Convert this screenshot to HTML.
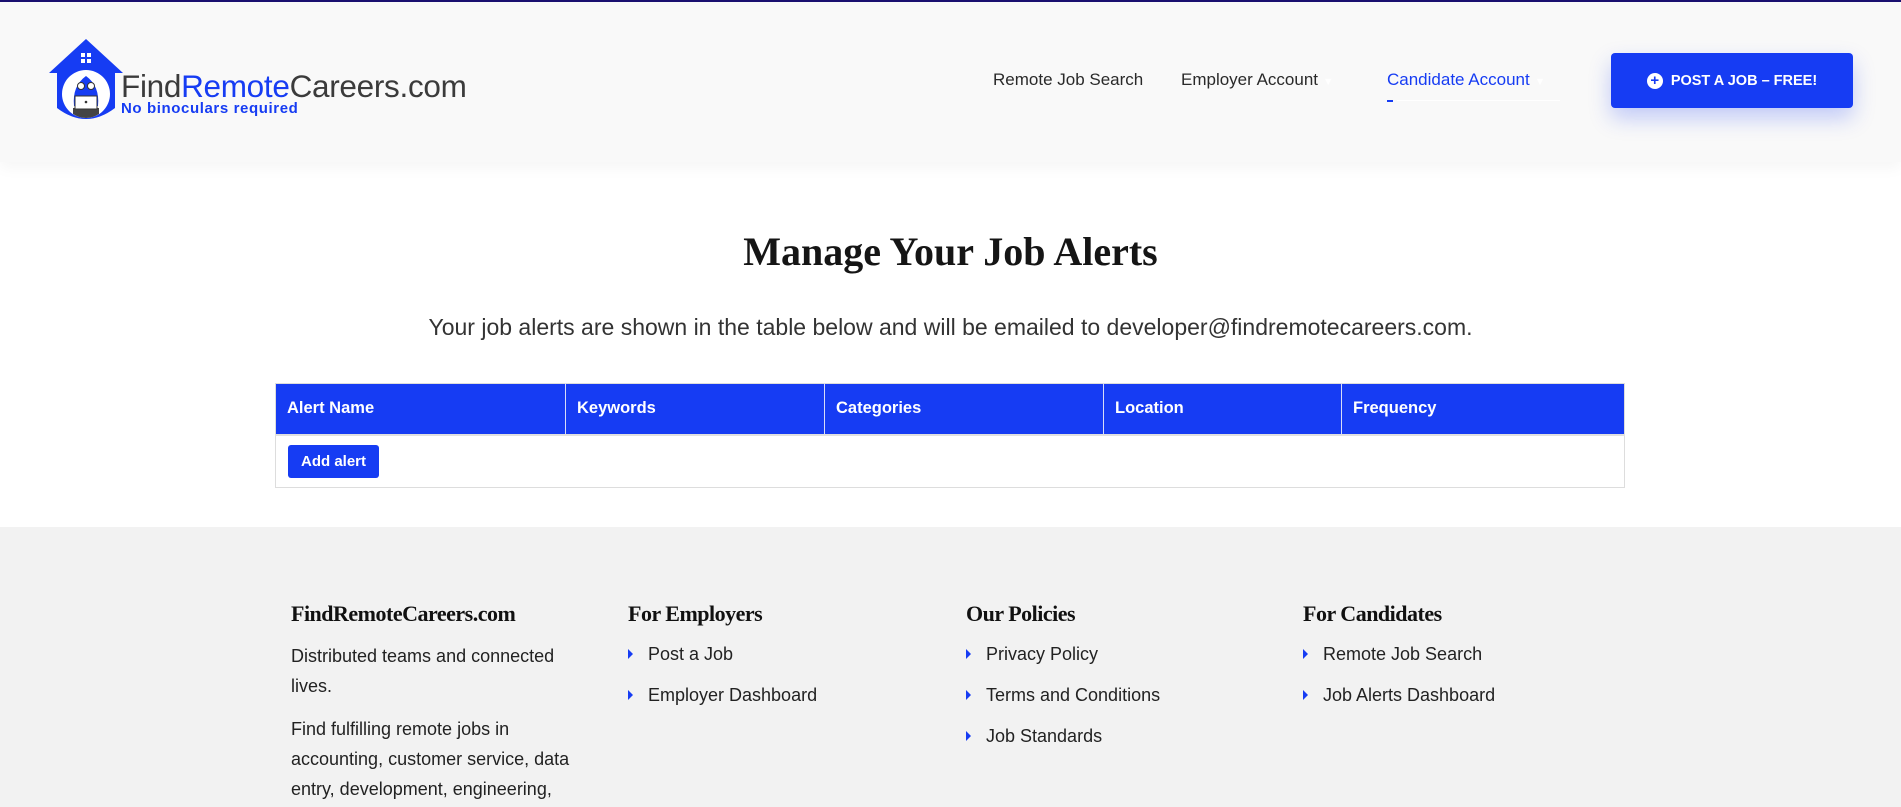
<!DOCTYPE html>
<html><head><meta charset="utf-8"><style>
*{margin:0;padding:0;box-sizing:border-box}
body{width:1901px;height:807px;overflow:hidden;background:#fff;font-family:"Liberation Sans",sans-serif;position:relative;color:#222}
.a{position:absolute;white-space:nowrap}
.hdr{position:absolute;left:0;top:0;width:1901px;height:162px;background:#f9f9f9;border-top:2px solid #1a1070;box-shadow:0 6px 14px rgba(0,0,0,0.04)}
.nav{font-size:17px;color:#2a2a2a}
.btn{position:absolute;left:1611px;top:53px;width:242px;height:55px;background:#163cf3;border-radius:4px;box-shadow:0 10px 22px rgba(22,60,243,0.25);color:#fff;font-weight:bold;font-size:14.5px;display:flex;align-items:center;justify-content:center;gap:8px}
.foot{position:absolute;left:0;top:527px;width:1901px;height:280px;background:#f2f2f2}
.fh{font-family:"Liberation Serif",serif;font-weight:bold;font-size:22px;color:#111;letter-spacing:-0.5px}
.ft{font-size:18px;color:#222}
.tri{display:inline-block;width:0;height:0;border-left:5px solid #163cf3;border-top:5px solid transparent;border-bottom:5px solid transparent;margin-right:15px;vertical-align:1px}
th{color:#fff;font-weight:bold;font-size:16.5px;text-align:left;padding-left:11px;border-right:1px solid #d8dcf8;height:51px}
</style></head><body>
<div class="hdr"></div>
<svg class="a" style="left:48px;top:38px" width="76" height="84" viewBox="0 0 76 84">
<path d="M38 1 L75 35 L67 35 L67 70 Q38 92 9 70 L9 35 L1 35 Z" fill="#163cf3"/>
<rect x="33" y="15" width="4" height="4" fill="#fff"/><rect x="39" y="15" width="4" height="4" fill="#fff"/><rect x="33" y="21" width="4" height="4" fill="#fff"/><rect x="39" y="21" width="4" height="4" fill="#fff"/>
<circle cx="38" cy="56" r="24" fill="#fff"/>
<path d="M25 76 Q38 84 51 76 L51 70 L25 70 Z" fill="#444"/>
<path d="M26 68 Q24 48 38 38 Q52 48 50 68 Z" fill="#163cf3"/>
<circle cx="33" cy="48" r="3.5" fill="#fff" stroke="#333"/><circle cx="43" cy="48" r="3.5" fill="#fff" stroke="#333"/>
<rect x="27" y="58" width="22" height="13" fill="#fff" stroke="#333"/><circle cx="38" cy="64" r="1.3" fill="#333"/>
</svg>
<div class="a" style="left:121px;top:68px;font-size:31.5px;color:#3b3b3b;letter-spacing:-0.3px">Find<span style="color:#163cf3">Remote</span>Careers.com</div>
<div class="a" style="left:121px;top:100px;font-size:15px;font-weight:bold;color:#163cf3;letter-spacing:0.6px">No binoculars required</div>
<div class="a nav" style="left:993px;top:70px">Remote Job Search</div>
<div class="a nav" style="left:1181px;top:70px">Employer Account <span style="color:#fff;font-size:11px">▼</span></div>
<div class="a nav" style="left:1387px;top:70px;color:#163cf3">Candidate Account <span style="color:#fff;font-size:11px">▼</span></div>
<div class="a" style="left:1387px;top:100px;width:6px;height:2px;background:#163cf3"></div>
<div class="a" style="left:1397px;top:100px;width:163px;height:1px;background:#fff"></div>
<div class="btn"><span style="display:inline-flex;width:16px;height:16px;border-radius:50%;background:#fff;color:#163cf3;font-size:15px;align-items:center;justify-content:center;line-height:1">+</span>POST A JOB – FREE!</div>
<div class="a" style="left:0;width:1901px;top:228px;text-align:center;font-family:'Liberation Serif',serif;font-weight:bold;font-size:40px;color:#151515">Manage Your Job Alerts</div>
<div class="a" style="left:0;width:1901px;top:314px;text-align:center;font-size:23px;color:#333">Your job alerts are shown in the table below and will be emailed to developer@findremotecareers.com.</div>
<table class="a" style="left:275px;top:383px;width:1350px;border-collapse:collapse;border:1px solid #ddd">
<tr style="background:#163cf3"><th style="width:290px">Alert Name</th><th style="width:259px">Keywords</th><th style="width:279px">Categories</th><th style="width:238px">Location</th><th style="border-right:none">Frequency</th></tr>
<tr><td colspan="5" style="height:53px;padding-left:12px;background:#fff;border-top:2px solid #e0e0e0"><span style="display:inline-block;background:#163cf3;color:#fff;font-weight:bold;font-size:15px;padding:8px 13px;border-radius:3px">Add alert</span></td></tr>
</table>
<div class="foot"></div>
<div class="a fh" style="left:291px;top:601px">FindRemoteCareers.com</div>
<div class="a fh" style="left:628px;top:601px">For Employers</div>
<div class="a fh" style="left:966px;top:601px">Our Policies</div>
<div class="a fh" style="left:1303px;top:601px">For Candidates</div>
<div class="a ft" style="left:291px;top:642px;line-height:29.5px">Distributed teams and connected<br>lives.</div>
<div class="a ft" style="left:291px;top:714px;line-height:30px">Find fulfilling remote jobs in<br>accounting, customer service, data<br>entry, development, engineering,</div>
<div class="a ft" style="left:628px;top:644px"><span class="tri"></span>Post a Job</div>
<div class="a ft" style="left:628px;top:685px"><span class="tri"></span>Employer Dashboard</div>
<div class="a ft" style="left:966px;top:644px"><span class="tri"></span>Privacy Policy</div>
<div class="a ft" style="left:966px;top:685px"><span class="tri"></span>Terms and Conditions</div>
<div class="a ft" style="left:966px;top:726px"><span class="tri"></span>Job Standards</div>
<div class="a ft" style="left:1303px;top:644px"><span class="tri"></span>Remote Job Search</div>
<div class="a ft" style="left:1303px;top:685px"><span class="tri"></span>Job Alerts Dashboard</div>
</body></html>
